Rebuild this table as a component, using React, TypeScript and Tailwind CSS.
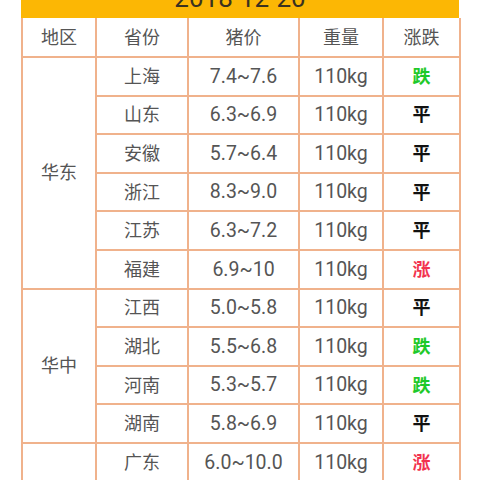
import React from "react";

type Row = { p: string; price: string; t: "up" | "down" | "flat" };
const groups: { region: string; rows: Row[] }[] = [
  {
    region: "华东",
    rows: [
      { p: "上海", price: "7.4~7.6", t: "down" },
      { p: "山东", price: "6.3~6.9", t: "flat" },
      { p: "安徽", price: "5.7~6.4", t: "flat" },
      { p: "浙江", price: "8.3~9.0", t: "flat" },
      { p: "江苏", price: "6.3~7.2", t: "flat" },
      { p: "福建", price: "6.9~10", t: "up" },
    ],
  },
  {
    region: "华中",
    rows: [
      { p: "江西", price: "5.0~5.8", t: "flat" },
      { p: "湖北", price: "5.5~6.8", t: "down" },
      { p: "河南", price: "5.3~5.7", t: "down" },
      { p: "湖南", price: "5.8~6.9", t: "flat" },
    ],
  },
  {
    region: "华南",
    rows: [
      { p: "广东", price: "6.0~10.0", t: "up" },
      { p: "广西", price: "6.0~7.0", t: "flat" },
      { p: "海南", price: "6.2~7.0", t: "flat" },
    ],
  },
];

const cell = "border-[2px] border-[#f0b28c] text-center align-middle p-0";

function Trend({ t }: { t: Row["t"] }) {
  if (t === "up") return <span className="font-bold text-[#f2334f]">涨</span>;
  if (t === "down") return <span className="font-bold text-[#1fc92a]">跌</span>;
  return <span className="font-bold text-[#111111]">平</span>;
}

export default function App() {
  return (
    <div
      className="w-[480px] h-[480px] overflow-hidden bg-white"
      style={{ fontFamily: "Roboto, 'Noto Sans CJK SC', sans-serif" }}
    >
      <div className="ml-[21px] w-[438px]">
        <div className="h-[18px] bg-[#fcb704] overflow-hidden flex justify-center">
          <span className="text-[26px] leading-[26px] mt-[-15px] text-[#3a3220]">
            2018-12-20
          </span>
        </div>
        <table className="w-[438px] border-collapse table-fixed text-[18px] text-[#555555]">
          <colgroup>
            <col className="w-[74px]" />
            <col className="w-[92px]" />
            <col className="w-[111px]" />
            <col className="w-[84px]" />
            <col className="w-[77px]" />
          </colgroup>
          <thead>
            <tr className="h-[39px]">
              <th className={cell + " font-normal border-t-0"}>地区</th>
              <th className={cell + " font-normal border-t-0"}>省份</th>
              <th className={cell + " font-normal border-t-0"}>猪价</th>
              <th className={cell + " font-normal border-t-0"}>重量</th>
              <th className={cell + " font-normal border-t-0"}>涨跌</th>
            </tr>
          </thead>
          <tbody>
            {groups.map((g) =>
              g.rows.map((r, i) => (
                <tr key={g.region + r.p} className="h-[38.6px]">
                  {i === 0 && (
                    <td className={cell} rowSpan={g.rows.length}>
                      {g.region}
                    </td>
                  )}
                  <td className={cell}>{r.p}</td>
                  <td className={cell + " text-[19.5px]"}>{r.price}</td>
                  <td className={cell + " text-[19.5px]"}>110kg</td>
                  <td className={cell}>
                    <Trend t={r.t} />
                  </td>
                </tr>
              ))
            )}
          </tbody>
        </table>
      </div>
    </div>
  );
}
